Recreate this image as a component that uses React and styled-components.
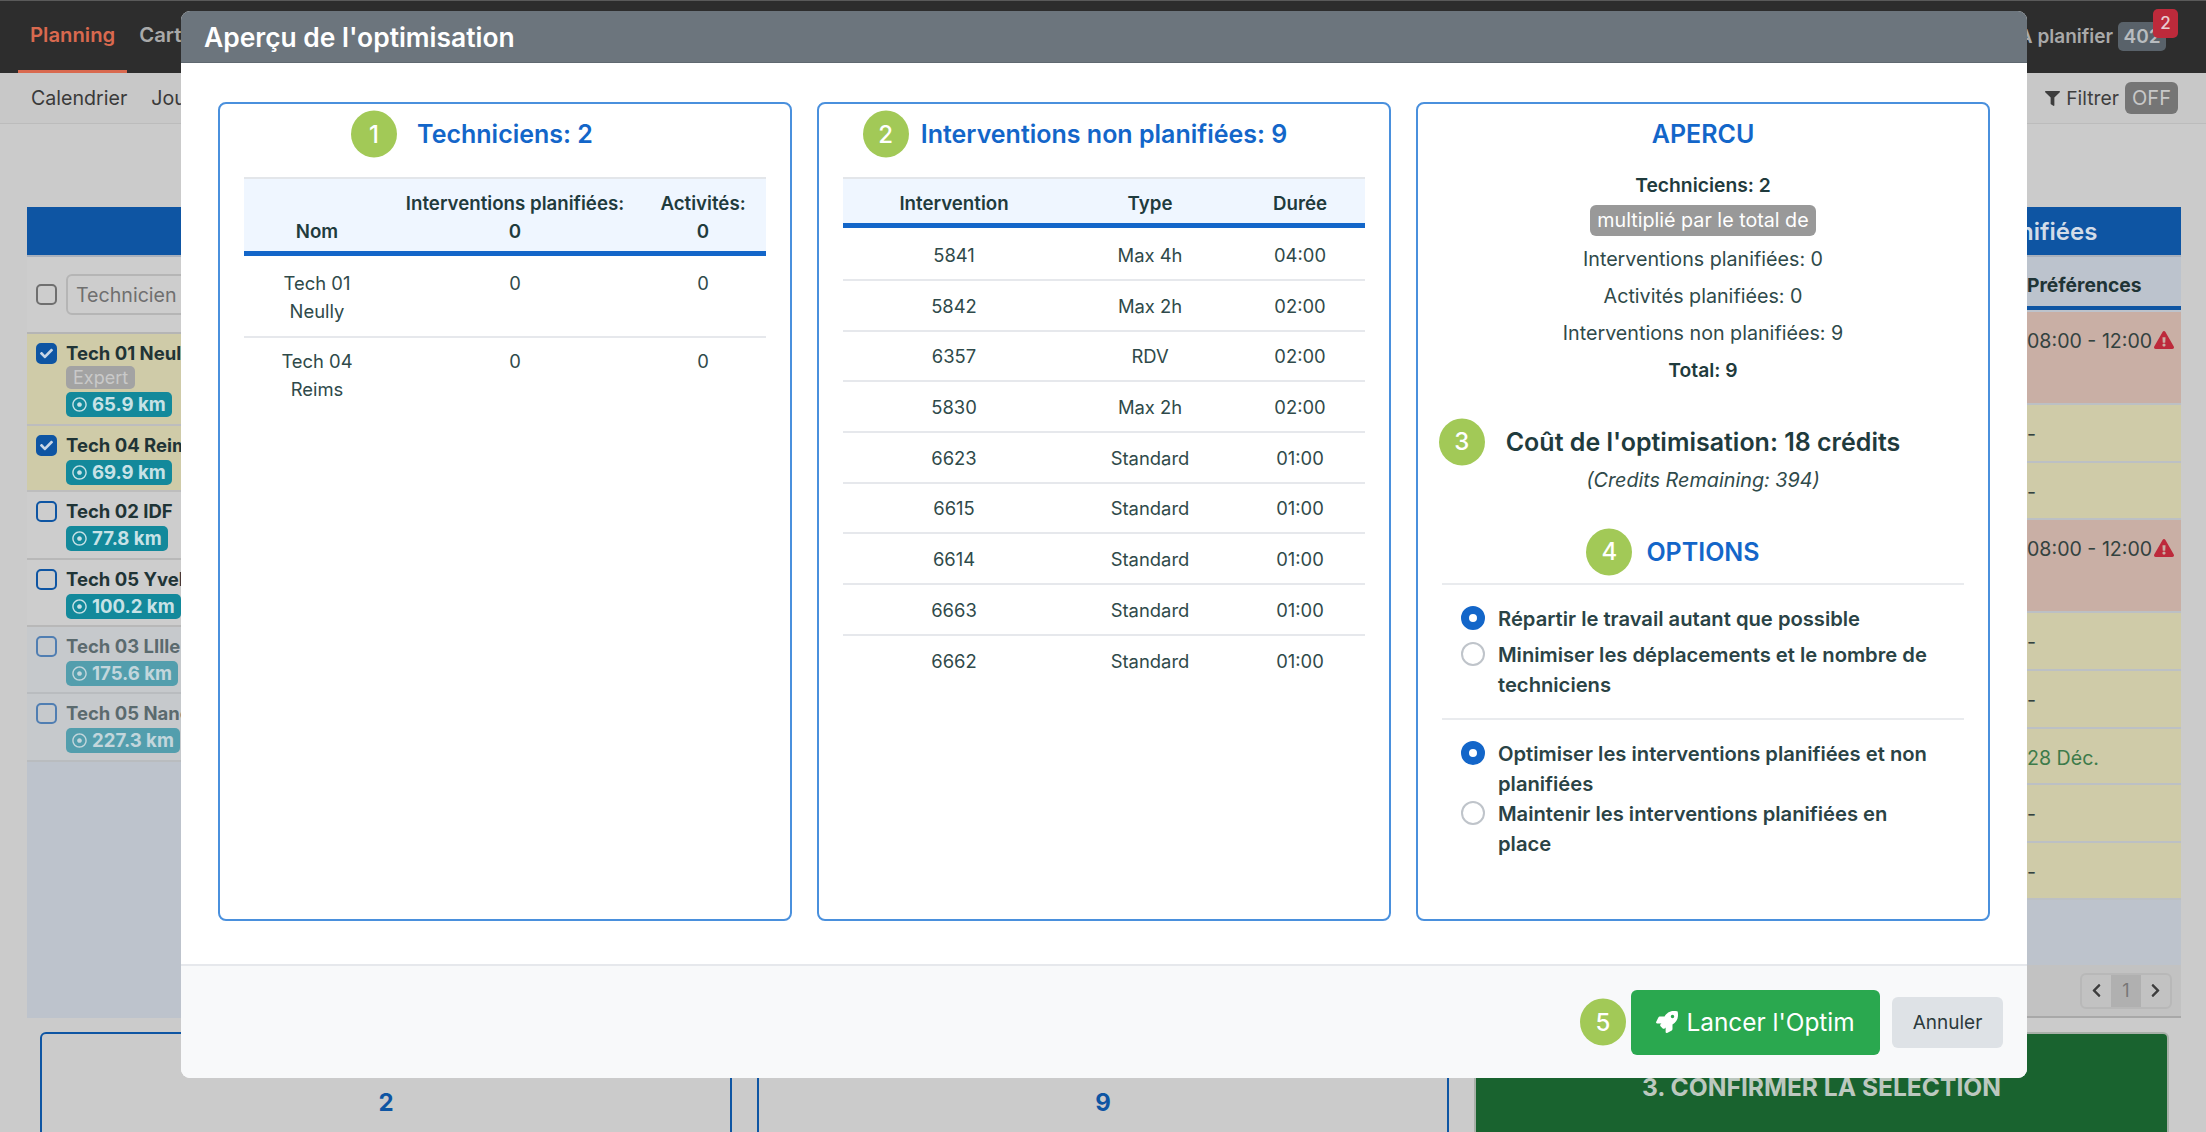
import React from "react";
import styled, { createGlobalStyle } from "styled-components";
import { FaRocket, FaFilter, FaExclamationTriangle, FaRegDotCircle, FaChevronLeft, FaChevronRight, FaCheck } from "react-icons/fa";

const Global = createGlobalStyle`
  html, body { margin: 0; padding: 0; height: 100%; overflow: hidden; }
  body { font-family: Inter, "Noto Sans", "Liberation Sans", sans-serif; background: #cbcbcb; color: #1f3b3d; }
  * { box-sizing: border-box; }
`;

const Page = styled.div`
  width: 2206px; height: 1132px; overflow: hidden; background: #cbcbcb;
  display: flex; flex-direction: column; position: relative;
`;
const TopBar = styled.header`
  height: 73px; flex: none; background: #2d2d2d; border-top: 1px solid #5a5a5a;
  display: flex; align-items: stretch; justify-content: space-between; padding: 0 28px 0 18px;
`;
const Tabs = styled.nav`display: flex; align-items: stretch;`;
const Tab = styled.a`
  display: flex; align-items: center; padding: 0 12px 3px; font-size: 20.3px; font-weight: 600;
  color: ${p => (p.$active ? "#d9694f" : "#a9a9a9")};
  border-bottom: 3px solid ${p => (p.$active ? "#d9694f" : "transparent")};
`;
const PlanGroup = styled.div`display: flex; align-items: center; gap: 5px; font-size: 19px; font-weight: 600; color: #a9a9a9; padding-bottom: 2px;`;
const CountWrap = styled.span`
  position: relative; width: 48px; height: 29px; border-radius: 5px; background: #59626a; color: #b8bcbf;
  display: flex; align-items: center; justify-content: center; margin-right: 12px; font-size: 19px;
`;
const Alert = styled.span`
  position: absolute; left: 35px; top: -13px; width: 25px; height: 29px; border-radius: 5px; background: #bd2a3b;
  color: #e8cdd0; font-size: 17px; font-weight: 500; display: flex; align-items: center; justify-content: center;
`;
const SubBar = styled.div`
  height: 51px; flex: none; background: #c8c8c8; border-bottom: 1px solid #bcbcbc;
  display: flex; align-items: center; justify-content: space-between; padding: 0 28px 0 31px; font-size: 19.6px; color: #3a3a3a;
`;
const SubLinks = styled.div`display: flex; gap: 24px;`;
const FilterGroup = styled.div`display: flex; align-items: center; gap: 6px; color: #3e3e3e; font-size: 19.3px;`;
const OffPill = styled.span`
  width: 53px; height: 32px; border-radius: 6px; background: #757575; color: #c8c8c8;
  display: flex; align-items: center; justify-content: center; font-size: 20px;
`;
const Work = styled.main`
  flex: none; padding: 83px 25px 0 27px; display: grid; grid-template-columns: 490px 1fr 490px; height: 895px;
`;
const SidePanel = styled.section`
  background: #bdc3cc; height: 811px; display: flex; flex-direction: column; position: relative;
`;
const SideHead = styled.div`
  height: 50px; flex: none; background: #0e55a3; color: #d3dce8; border-bottom: 2px solid #a9b0bb;
  display: flex; align-items: center; justify-content: center; font-size: 24px; font-weight: 600;
`;
const SearchRow = styled.div`
  height: 77px; flex: none; display: flex; align-items: center; gap: 9px; padding: 0 9px; background: #cdcdcd;
  border-bottom: 2px solid #b5b5b5;
`;
const Box = styled.span`
  width: 21px; height: 21px; flex: none; border-radius: 5px; margin-top: ${p => p.$mt || 0}px;
  border: 2px solid ${p => (p.$border || "#0e55a3")};
  background: ${p => (p.$on ? "#0e55a3" : "transparent")};
  color: #c8d6e6; display: flex; align-items: center; justify-content: center; font-size: 13px;
`;
const SearchInput = styled.div`
  flex: 1; height: 41px; border: 2px solid #b5b5b5; border-radius: 6px; padding: 0 8px; display: flex; align-items: center;
  font-size: 19.6px; color: #6f6f6f;
`;
const TechRow = styled.div`
  display: flex; gap: 9px; padding: 8px 9px 0; height: ${p => p.$h}px; flex: none;
  background: ${p => (p.$sel ? "#cfcba8" : "#cdcdcd")};
  border-bottom: 2px solid ${p => (p.$sel ? "#bdbdbd" : "#b8b8b8")};
  opacity: ${p => (p.$dim ? 0.62 : 1)};
`;
const TechText = styled.div`display: flex; flex-direction: column; align-items: flex-start; gap: 2px;`;
const TechName = styled.span`font-size: 18.5px; font-weight: 700; line-height: 22px; color: #1f3436;`;
const GreyTag = styled.span`
  background: #a3a3a3; color: #c9c9c9; font-size: 18px; line-height: 23px; padding: 0 7px; border-radius: 5px; margin-bottom: -1px;
`;
const KmTag = styled.span`
  background: #13899b; color: #c8e2e6; font-size: 18.6px; font-weight: 700; line-height: 25px; height: 25px; padding: 0 6px;
  border-radius: 5px; display: inline-flex; align-items: center; gap: 5px; margin-top: 2px; white-space: nowrap;
  svg { font-size: 15px; }
`;
const ColHead = styled.div`
  height: 53px; flex: none; background: #bcc3cd; border-bottom: 4px solid #0e55a3;
  display: grid; grid-template-columns: 1fr 154px; align-items: center; font-size: 19.3px; font-weight: 700; color: #1f3436; padding-top: 6px; margin-bottom: 2px;
`;
const PrefRow = styled.div`
  display: grid; grid-template-columns: 1fr 154px; height: ${p => p.$h}px; flex: none; padding-top: 15px;
  background: ${p => (p.$red ? "#c9afa5" : "#cfcba8")}; border-bottom: 2px solid #bcc0c4;
  font-size: 19.6px; line-height: 28px; color: ${p => (p.$green ? "#3d7b4a" : "#33423f")};
`;
const PrefCell = styled.div`grid-column: 2; display: flex; align-items: flex-start; gap: 2px; white-space: nowrap; svg { color: #bd2a3b; font-size: 20px; margin-top: 3px; }`;
const PagerBar = styled.div`
  margin-top: auto; height: 53px; flex: none; background: #c2c2c2; border-bottom: 2px solid #a8a8a8;
  display: flex; align-items: center; justify-content: flex-end; padding: 0 9px 0 0;
`;
const Pager = styled.div`display: flex; width: 92px; height: 36px; border: 2px solid #b8b8b8; border-radius: 6px; overflow: hidden;`;
const PageCell = styled.span`
  flex: 1; display: flex; align-items: center; justify-content: center; font-size: 18px; color: ${p => (p.$on ? "#777" : "#3d3d3d")};
  background: ${p => (p.$on ? "#b0b0b0" : "transparent")};
  svg { font-size: 15px; }
`;
const BottomRow = styled.div`
  flex: none; padding: 14px 36px 0 40px; display: grid; grid-template-columns: 692px 692px 695px; column-gap: 25px; height: 120px; margin-top: -1px;
`;
const CountBox = styled.div`
  height: 120px; border: 2px solid #0e55a3; border-radius: 6px; color: #0e55a3; font-size: 24px; font-weight: 700;
  display: flex; justify-content: center; padding-top: 54px;
`;
const ConfirmBox = styled.div`
  height: 120px; border: 2px solid #a8b0a8; border-radius: 6px; background: #19632f; color: #bcc8bf;
  font-size: 24.6px; font-weight: 700; display: flex; justify-content: center; padding-top: 38px;
`;

const Modal = styled.div`
  position: absolute; left: 181px; top: 11px; width: 1846px; height: 1067px; background: #fff; border-radius: 9px; overflow: hidden;
  display: flex; flex-direction: column;
`;
const ModalHead = styled.div`
  height: 52px; flex: none; background: #6c757d; border-bottom: 1px solid #5f6870; color: #fff; font-size: 26.4px; font-weight: 600;
  display: flex; align-items: center; padding: 0 23px;
`;
const ModalBody = styled.div`
  flex: 1; display: grid; grid-template-columns: repeat(3, 574px); column-gap: 25px; padding: 39px 37px 43px;
`;
const Card = styled.div`
  border: 2px solid #4a90dd; border-radius: 8px; padding: 0 24px; display: flex; flex-direction: column;
`;
const HeadRow = styled.div`
  height: ${p => p.$h || 60}px; flex: none; display: flex; align-items: center; justify-content: center; margin-top: ${p => p.$mt || 0}px;
`;
const Title = styled.h3`
  position: relative; margin: 0; font-size: ${p => p.$size || 25}px; font-weight: 600; line-height: 30px;
  color: ${p => p.$dark ? "#1f3b3d" : "#1366c9"}; white-space: nowrap;
`;
const Step = styled.span`
  position: absolute; right: calc(100% + ${p => p.$gap}px); top: 50%; transform: translateY(-50%);
  width: 46px; height: 47px; border-radius: 50%; background: #a2c957; color: #fff; font-size: 24px; font-weight: 500;
  display: flex; align-items: center; justify-content: center;
`;
const Table = styled.table`
  width: 522px; margin-top: 13px; border-collapse: collapse; table-layout: fixed; font-size: 18.4px; line-height: 28px; color: #2f4a4a; text-align: center;
`;
const Th = styled.th`
  background: #eff6ff; font-weight: 600; color: #1f3b3d; vertical-align: bottom; padding: 11px 0 5px;
  border-top: 2px solid #e3e6ea; border-bottom: 5px solid #1366c9; font-size: 18.7px; width: ${p => p.$w}px;
`;
const Td = styled.td`
  padding: ${p => p.$pad}; vertical-align: top; border-bottom: ${p => (p.$last ? "0" : "2px solid #e6e8ec")};
`;
const Stats = styled.div`display: flex; flex-direction: column; align-items: center; margin-top: 7px; font-size: 19.7px; line-height: 28px; color: #2f4a4a; gap: 9px;`;
const StatTop = styled.div`display: flex; flex-direction: column; align-items: center; gap: 6px;`;
const StatBold = styled.strong`font-weight: 600; font-size: 19.3px; color: #1f3b3d;`;
const MultTag = styled.span`
  background: #999; color: #fff; height: 31px; line-height: 31px; border-radius: 6px; padding: 0 7px; font-size: 19.7px;
`;
const Remaining = styled.em`display: block; text-align: center; margin-top: 1px; font-size: 19.8px; line-height: 28px; color: #2f4a4a;`;
const Divider = styled.hr`border: 0; border-top: 2px solid #e9ebee; margin: ${p => p.$mt || 0}px 0 0;`;
const OptGroup = styled.div`padding: 19px 19px 18px; display: flex; flex-direction: column;`;
const Opt = styled.label`
  display: flex; gap: 13px; min-height: 36px; font-size: 20.2px; line-height: 30px; font-weight: 600; color: #2a4345;
`;
const Radio = styled.span`
  width: 24px; height: 24px; flex: none; border-radius: 50%; margin-top: 2px; background: #fff;
  border: ${p => (p.$on ? "8px solid #1366c9" : "2px solid #bfc4ca")};
`;
const ModalFoot = styled.div`
  height: 114px; flex: none; background: #f8f9fa; border-top: 2px solid #e6e8ec; display: flex; align-items: center; justify-content: flex-end; padding: 0 24px 0 0;
`;
const GoButton = styled.button`
  position: relative; width: 249px; height: 65px; border: 0; border-radius: 6px; background: #2aa84f; color: #fff; font: 400 24.4px Inter, sans-serif;
  display: flex; align-items: center; justify-content: center; gap: 8px; padding: 0; margin-right: 12px;
`;
const CancelButton = styled.button`
  width: 111px; height: 51px; border: 0; border-radius: 6px; background: #dee2e6; color: #2c3a3c; font: 400 19px Inter, sans-serif;
`;

const tech = [
  { n: "Tech 01 Neully", km: "65.9 km", h: 92, sel: 1, on: 1, tag: "Expert" },
  { n: "Tech 04 Reims", km: "69.9 km", h: 66, sel: 1, on: 1 },
  { n: "Tech 02 IDF", km: "77.8 km", h: 68 },
  { n: "Tech 05 Yvelines", km: "100.2 km", h: 67 },
  { n: "Tech 03 LIlle", km: "175.6 km", h: 67, dim: 1 },
  { n: "Tech 05 Nancy", km: "227.3 km", h: 68, dim: 1 },
];
const prefs = [
  { h: 93, red: 1, t: "08:00 - 12:00", warn: 1 }, { h: 58, t: "-" }, { h: 57, t: "-" },
  { h: 93, red: 1, t: "08:00 - 12:00", warn: 1 }, { h: 58, t: "-" }, { h: 58, t: "-" },
  { h: 56, t: "28 Déc.", green: 1 }, { h: 58, t: "-" }, { h: 57, t: "-" },
];
const jobs = [
  ["5841", "Max 4h", "04:00"], ["5842", "Max 2h", "02:00"], ["6357", "RDV", "02:00"], ["5830", "Max 2h", "02:00"],
  ["6623", "Standard", "01:00"], ["6615", "Standard", "01:00"], ["6614", "Standard", "01:00"], ["6663", "Standard", "01:00"], ["6662", "Standard", "01:00"],
];

export default function App() {
  return (
    <Page>
      <Global />
      <TopBar>
        <Tabs>
          <Tab $active>Planning</Tab>
          <Tab>Carte</Tab>
        </Tabs>
        <PlanGroup>
          A planifier
          <CountWrap>402<Alert>2</Alert></CountWrap>
        </PlanGroup>
      </TopBar>
      <SubBar>
        <SubLinks><span>Calendrier</span><span>Jour</span></SubLinks>
        <FilterGroup><FaFilter size={15} />Filtrer<OffPill>OFF</OffPill></FilterGroup>
      </SubBar>
      <Work>
        <SidePanel>
          <SideHead />
          <SearchRow><Box $border="#6f6f6f" /><SearchInput>Technicien / Secteur</SearchInput></SearchRow>
          {tech.map(t => (
            <TechRow key={t.n} $h={t.h} $sel={t.sel} $dim={t.dim}>
              <Box $on={t.on} $mt={1}>{t.on ? <FaCheck /> : null}</Box>
              <TechText>
                <TechName>{t.n}</TechName>
                {t.tag && <GreyTag>{t.tag}</GreyTag>}
                <KmTag><FaRegDotCircle />{t.km}</KmTag>
              </TechText>
            </TechRow>
          ))}
        </SidePanel>
        <div />
        <SidePanel>
          <SideHead>Interventions non planifiées</SideHead>
          <ColHead><span /><span>Préférences</span></ColHead>
          {prefs.map((p, i) => (
            <PrefRow key={i} $h={p.h} $red={p.red} $green={p.green}>
              <PrefCell>{p.t}{p.warn && <FaExclamationTriangle />}</PrefCell>
            </PrefRow>
          ))}
          <PagerBar>
            <Pager>
              <PageCell><FaChevronLeft /></PageCell>
              <PageCell $on>1</PageCell>
              <PageCell><FaChevronRight /></PageCell>
            </Pager>
          </PagerBar>
        </SidePanel>
      </Work>
      <BottomRow>
        <CountBox>2</CountBox>
        <CountBox>9</CountBox>
        <ConfirmBox>3. CONFIRMER LA SÉLECTION</ConfirmBox>
      </BottomRow>

      <Modal>
        <ModalHead>Aperçu de l'optimisation</ModalHead>
        <ModalBody>
          <Card>
            <HeadRow><Title><Step $gap={20}>1</Step>Techniciens: 2</Title></HeadRow>
            <Table>
              <thead>
                <tr>
                  <Th $w={146}>Nom</Th>
                  <Th $w={250}>Interventions planifiées:<br />0</Th>
                  <Th $w={126}>Activités:<br />0</Th>
                </tr>
              </thead>
              <tbody>
                <tr><Td $pad="13px 0 11px">Tech 01<br />Neully</Td><Td $pad="13px 0 11px">0</Td><Td $pad="13px 0 11px">0</Td></tr>
                <tr><Td $pad="9px 0" $last>Tech 04<br />Reims</Td><Td $pad="9px 0" $last>0</Td><Td $pad="9px 0" $last>0</Td></tr>
              </tbody>
            </Table>
          </Card>
          <Card>
            <HeadRow><Title><Step $gap={12}>2</Step>Interventions non planifiées: 9</Title></HeadRow>
            <Table>
              <thead>
                <tr><Th $w={222}>Intervention</Th><Th $w={170}>Type</Th><Th $w={130}>Durée</Th></tr>
              </thead>
              <tbody>
                {jobs.map((j, i) => (
                  <tr key={j[0]}>
                    {j.map((c, k) => <Td key={k} $pad={i === 0 ? "13px 0 10px" : "10.7px 0 10px"} $last={i === jobs.length - 1}>{c}</Td>)}
                  </tr>
                ))}
              </tbody>
            </Table>
          </Card>
          <Card>
            <HeadRow><Title>APERCU</Title></HeadRow>
            <Stats>
              <StatTop>
                <StatBold>Techniciens: 2</StatBold>
                <MultTag>multiplié par le total de</MultTag>
              </StatTop>
              <span>Interventions planifiées: 0</span>
              <span>Activités planifiées: 0</span>
              <span>Interventions non planifiées: 9</span>
              <StatBold>Total: 9</StatBold>
            </Stats>
            <HeadRow $h={47} $mt={34}><Title $dark><Step $gap={21}>3</Step>Coût de l'optimisation: 18 crédits</Title></HeadRow>
            <Remaining>(Credits Remaining: 394)</Remaining>
            <HeadRow $h={47} $mt={34}><Title><Step $gap={14}>4</Step>OPTIONS</Title></HeadRow>
            <Divider $mt={8} />
            <OptGroup>
              <Opt><Radio $on /><span>Répartir le travail autant que possible</span></Opt>
              <Opt><Radio /><span>Minimiser les déplacements et le nombre de techniciens</span></Opt>
            </OptGroup>
            <Divider />
            <OptGroup>
              <Opt><Radio $on /><span>Optimiser les interventions planifiées et non planifiées</span></Opt>
              <Opt><Radio /><span>Maintenir les interventions planifiées en place</span></Opt>
            </OptGroup>
          </Card>
        </ModalBody>
        <ModalFoot>
          <GoButton><Step $gap={5}>5</Step><FaRocket size={22} />Lancer l'Optim</GoButton>
          <CancelButton>Annuler</CancelButton>
        </ModalFoot>
      </Modal>
    </Page>
  );
}
